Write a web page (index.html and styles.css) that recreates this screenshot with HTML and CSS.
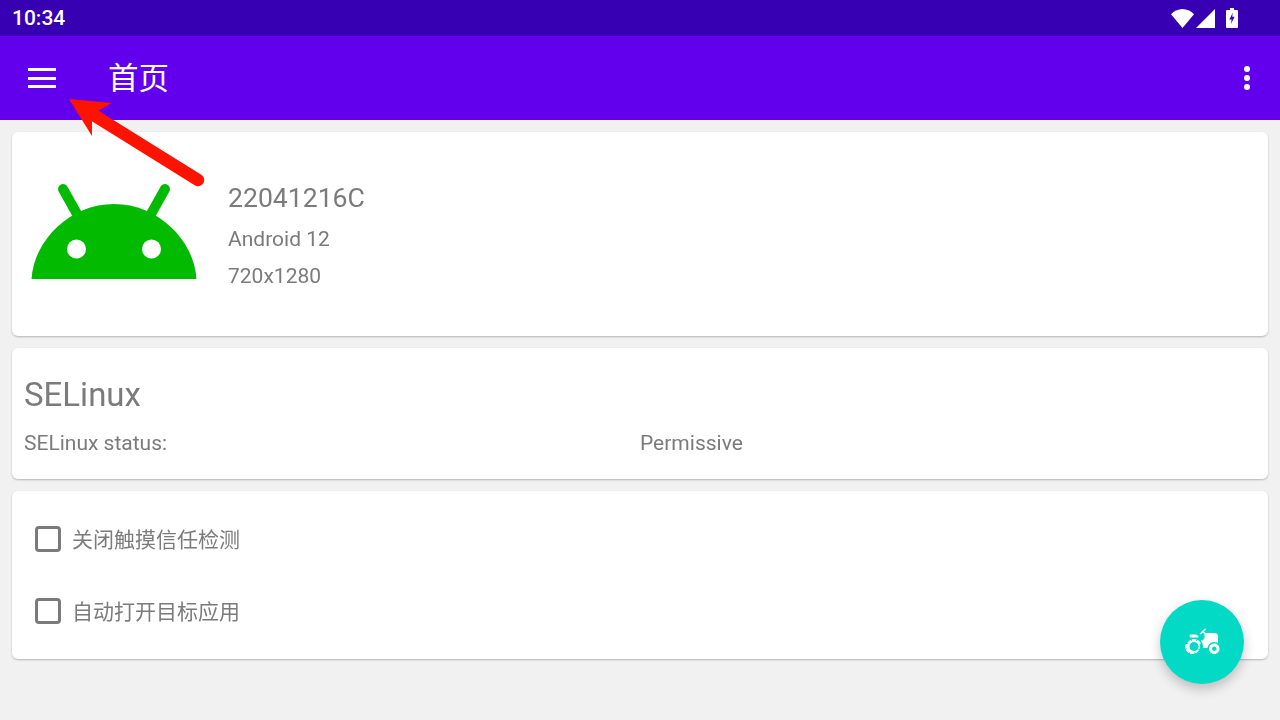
FILE: index.html
```html
<!DOCTYPE html>
<html lang="zh">
<head>
  <meta charset="UTF-8" />
  <meta name="viewport" content="width=device-width, initial-scale=1.0"/>
  <title>首页</title>
  <link rel="stylesheet" href="styles.css">
</head>
<body>
  <div class="status-bar">
    <span class="clock">10:34</span>
    <div class="status-icons">
      <svg class="icon-wifi" width="23" height="19" viewBox="0 0 23 19"><path d="M11.5 19L0 5.2C3 2.2 7 0 11.5 0S20 2.2 23 5.2z" fill="#fff"/></svg>
      <svg class="icon-signal" width="19" height="19" viewBox="0 0 19 19"><path d="M0 19L19 0v19z" fill="#fff"/></svg>
      <svg class="icon-battery" width="12" height="20" viewBox="0 0 12 20"><path d="M4 0h4v2h3a1 1 0 0 1 1 1v16a1 1 0 0 1-1 1H1a1 1 0 0 1-1-1V3a1 1 0 0 1 1-1h3z" fill="#fff"/><path d="M6.8 4.5L3.4 11.5h2.2L5 16l3.6-7.2H6.2z" fill="#3700b3"/></svg>
    </div>
  </div>

  <header class="toolbar">
    <div class="menu-icon"><span></span><span></span><span></span></div>
    <h1>首页</h1>
    <div class="more-icon"><span></span><span></span><span></span></div>
  </header>

  <main class="content">
    <section class="card device-card">
      <svg class="android-logo" width="204" height="204" viewBox="0 0 204 204">
        <path d="M51 57L65 82M153 57L139 82" stroke="#02bb00" stroke-width="10" stroke-linecap="round"/>
        <path d="M19.500 147C22 108 58 72 102 72S182 108 184.500 147z" fill="#02bb00"/>
        <circle cx="64.500" cy="117" r="9.500" fill="#fff"/>
        <circle cx="139.500" cy="117" r="9.500" fill="#fff"/>
      </svg>
      <div class="device-info">
        <div class="device-name">22041216C</div>
        <div class="device-line">Android 12</div>
        <div class="device-line">720x1280</div>
      </div>
    </section>

    <section class="card selinux-card">
      <h2>SELinux</h2>
      <div class="selinux-row">
        <span>SELinux status:</span>
        <span>Permissive</span>
      </div>
    </section>

    <section class="card options-card">
      <label class="option"><span class="checkbox"></span><span>关闭触摸信任检测</span></label>
      <label class="option"><span class="checkbox"></span><span>自动打开目标应用</span></label>
    </section>
  </main>

  <button class="fab">
    <svg width="36" height="36" viewBox="0 0 24 24" fill="#fff">
      <path d="M19.500 12c.93 0 1.780.28 2.500.76V8c0-1.100-.9-2-2-2h-6.290l-1.060-1.060 1.410-1.410-.71-.71-3.530 3.530.71.71 1.410-1.410L13 6.710V9c0 1.100-.9 2-2 2h-.54c.95 1.060 1.540 2.460 1.540 4 0 .34-.04.67-.09 1h3.140c.25-2.250 2.140-4 4.450-4z"/>
      <path d="M19.500 13c-1.930 0-3.500 1.570-3.500 3.500s1.570 3.500 3.500 3.500 3.500-1.570 3.500-3.500-1.570-3.500-3.500-3.500zm0 5c-.83 0-1.500-.67-1.500-1.500s.67-1.500 1.500-1.500 1.500.67 1.500 1.500-.67 1.500-1.500 1.500z"/>
      <path d="M4 9h5c0-1.100-.9-2-2-2H4c-.55 0-1 .45-1 1s.45 1 1 1z"/>
      <path d="M9.830 13.820l-.18-.47.93-.35c-.46-1.060-1.280-1.910-2.310-2.430l-.4.89-.46-.21.4-.9C7.260 10.130 6.640 10 6 10c-.53 0-1.040.11-1.520.26l.34.91-.47.18L4 10.420c-1.060.46-1.910 1.280-2.430 2.310l.89.4-.21.46-.9-.4C.13 13.740 0 14.360 0 15c0 .53.11 1.040.26 1.520l.91-.34.18.47-.93.35c.46 1.060 1.280 1.910 2.310 2.430l.4-.89.46.21-.4.9c.55.22 1.170.35 1.810.35.53 0 1.040-.11 1.520-.26l-.34-.91.47-.18.35.93c1.060-.46 1.910-1.280 2.430-2.310l-.89-.4.21-.46.9.4c.22-.55.35-1.170.35-1.810 0-.53-.11-1.040-.26-1.520l-.91.34zm-2.680 3.960c-1.530.63-3.290-.09-3.920-1.620-.63-1.530.09-3.290 1.620-3.920 1.530-.63 3.290.09 3.920 1.620.64 1.530-.09 3.290-1.620 3.920z"/>
    </svg>
  </button>

  <!-- red annotation arrow over the toolbar -->
  <svg class="arrow" width="220" height="200" viewBox="0 0 220 200">
    <path d="M198 180L92 114" stroke="#fe1200" stroke-width="12.500" stroke-linecap="round"/>
    <path d="M69 99L112 103 98 111 92 121 92 136z" fill="#fe1200"/>
  </svg>
</body>
</html>
```

FILE: styles.css
```css
* { box-sizing: border-box; }
body {
  margin: 0;
  width: 1280px;
  height: 720px;
  overflow: hidden;
  position: relative;
  background: #f1f1f1;
  font-family: Roboto, "Noto Sans CJK SC", sans-serif;
  color: #7b7b7b;
}
.status-bar {
  height: 36px;
  background: #3700b3;
  color: #fff;
  display: flex;
  align-items: center;
  justify-content: space-between;
  padding: 0 42px 0 12px;
}
.clock {
  font-size: 21px;
  font-weight: 500;
  line-height: 38px;
}
.status-icons {
  display: flex;
  align-items: center;
}
.icon-wifi { margin-right: 2px; }
.icon-signal { margin-right: 11px; }
.toolbar {
  height: 84px;
  background: #6200ee;
  color: #fff;
  display: flex;
  align-items: center;
  padding: 0 30px 0 28px;
}
.toolbar h1 {
  flex: 1;
  margin: 0 0 4px 52px;
  font-size: 30.5px;
  font-weight: 400;
  font-family: "Noto Sans CJK SC", sans-serif;
}
.menu-icon {
  width: 28px;
  display: flex;
  flex-direction: column;
  gap: 5.5px;
}
.menu-icon span {
  height: 3px;
  background: #fff;
}
.more-icon {
  display: flex;
  flex-direction: column;
  gap: 3px;
}
.more-icon span {
  width: 6px;
  height: 6px;
  border-radius: 50%;
  background: #fff;
}
.content {
  padding: 12px;
  display: flex;
  flex-direction: column;
  gap: 12px;
  will-change: transform;
}
.card {
  background: #fff;
  border-radius: 6px;
  box-shadow: 0 1px 2px rgba(0,0,0,0.25);
}
.device-card {
  height: 204px;
  display: flex;
  align-items: center;
}
.android-logo { flex: none; }
.device-info {
  margin-left: 12px;
  margin-top: 6px;
}
.device-name {
  font-size: 26.6px;
  line-height: 36px;
  margin-bottom: 5px;
}
.device-line {
  font-size: 21px;
  line-height: 37px;
}
.selinux-card {
  height: 131px;
  padding: 28px 12px 0;
}
.selinux-card h2 {
  margin: 0;
  font-size: 33px;
  font-weight: 400;
  line-height: 38px;
}
.selinux-row {
  display: grid;
  grid-template-columns: 1fr 1fr;
  margin-top: 15px;
  font-size: 21px;
  line-height: 28px;
}
.options-card {
  padding: 12px 0;
}
.option {
  height: 72px;
  display: flex;
  align-items: center;
  padding-left: 23px;
  font-size: 21px;
  line-height: 28px;
  font-family: "Noto Sans CJK SC", sans-serif;
}
.option span:last-child { margin-bottom: 2px; }
.checkbox {
  width: 26px;
  height: 26px;
  margin-right: 11px;
  border: 3.5px solid #7b7b7b;
  border-radius: 4px;
}
.fab {
  position: absolute;
  left: 1160px;
  top: 600px;
  width: 84px;
  height: 84px;
  padding: 0 0 0 2px;
  border: none;
  border-radius: 50%;
  background: #03dac5;
  box-shadow: 0 5px 12px rgba(0,0,0,0.22);
  display: flex;
  align-items: center;
  justify-content: center;
}
.arrow {
  position: absolute;
  left: 0;
  top: 0;
}
```
